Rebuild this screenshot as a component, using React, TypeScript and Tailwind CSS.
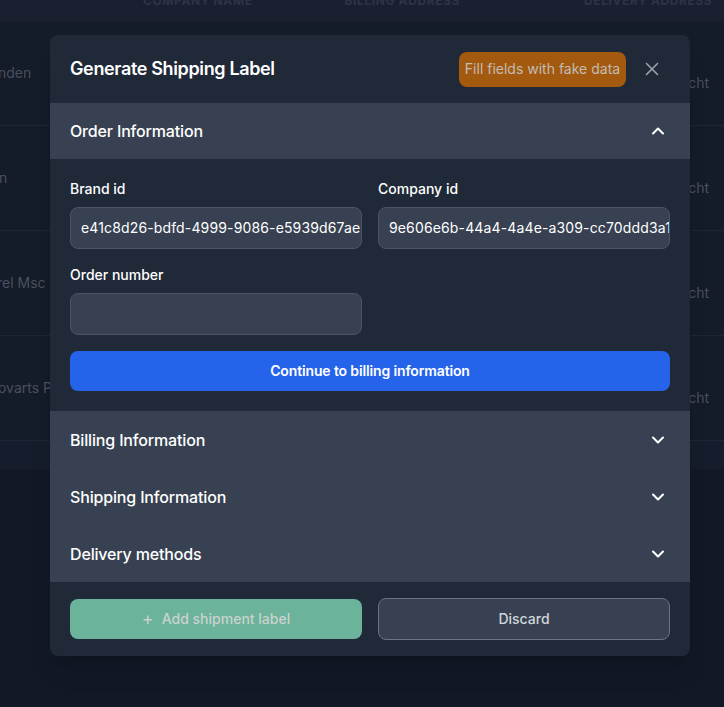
import React from "react";

const font = { fontFamily: "Inter, 'Noto Sans', sans-serif" };

function Chevron({ up }: { up?: boolean }) {
  return (
    <svg width="16" height="16" viewBox="0 0 16 16" fill="none" className="shrink-0">
      <path
        d={up ? "M3 10.5 8 5.5l5 5" : "M3 5.5 8 10.5l5-5"}
        stroke="white"
        strokeWidth="2"
        strokeLinecap="round"
        strokeLinejoin="round"
      />
    </svg>
  );
}

function SectionHeader({ title, up, h }: { title: string; up?: boolean; h: string }) {
  return (
    <div className={`flex items-center justify-between pl-5 pr-[24px] bg-[#374151] ${h}`}>
      <span className="text-base font-medium tracking-[-0.01em] text-white">{title}</span>
      <Chevron up={up} />
    </div>
  );
}

function Field({ label, value }: { label: string; value: string }) {
  return (
    <div className="flex flex-col">
      <label className="mb-2 text-sm font-medium leading-5 text-white">{label}</label>
      <div className="h-[42px] overflow-hidden whitespace-nowrap rounded-lg border border-[#4b5563] bg-[#374151] px-2.5 py-2.5 text-sm leading-5 tracking-[0.01em] text-white">
        {value}
      </div>
    </div>
  );
}

const rows = [
  { left: "nden", ml: "-ml-[2px]" },
  { left: "n", ml: "-ml-[1px]" },
  { left: "rel Msc", ml: "-ml-[3px]" },
  { left: "ovarts Pe", ml: "-ml-[2px]" },
];

export default function App() {
  return (
    <div className="relative h-[707px] w-[724px] overflow-hidden bg-[#121826]" style={font}>
      {/* background table */}
      <div className="flex flex-col">
        <div className="relative h-[21px] overflow-hidden bg-[#1b2030]">
          <div className="flex -mt-[5px] text-xs font-bold uppercase leading-none tracking-wider text-[#2d3445]">
            <span className="ml-[143px]">Company name</span>
            <span className="ml-[92px]">Billing address</span>
            <span className="ml-[124px] whitespace-nowrap">Delivery address</span>
          </div>
        </div>
        {rows.map((r, i) => (
          <div key={i} className="flex h-[105px] items-center justify-between border-b border-[#1f2534] bg-[#141b29] text-sm text-[#4a505e]">
            <span className={`whitespace-nowrap ${r.ml}`}>{r.left}</span>
            <span className="mt-[20px] whitespace-nowrap -mr-[1px] pr-[16px]">Utrecht</span>
          </div>
        ))}
        <div className="h-[28px] bg-[#151c2b]" />
      </div>

      {/* modal overlay */}
      <div className="absolute left-[50px] top-[35px] w-[640px] overflow-hidden rounded-lg bg-[#1f2937] shadow-xl">
        <div className="flex h-[68px] items-center justify-between pl-5 pr-5">
          <h2 className="text-lg font-semibold tracking-[-0.02em] text-white">Generate Shipping Label</h2>
          <div className="flex items-center gap-2">
            <button className="h-[35px] w-[167px] rounded-lg bg-[#a35a0e] text-sm text-[#c2bcb6]">
              Fill fields with fake data
            </button>
            <button className="flex h-9 w-9 items-center justify-center">
              <svg width="14" height="14" viewBox="0 0 14 14" fill="none">
                <path d="M1.5 1.5l11 11M12.5 1.5l-11 11" stroke="#9ca3af" strokeWidth="1.6" strokeLinecap="round" />
              </svg>
            </button>
          </div>
        </div>

        <SectionHeader title="Order Information" up h="h-[56px]" />
        <div className="flex flex-col gap-4 px-5 pb-5 pt-5">
          <div className="grid grid-cols-2 gap-4">
            <Field label="Brand id" value="e41c8d26-bdfd-4999-9086-e5939d67ae5c" />
            <Field label="Company id" value="9e606e6b-44a4-4a4e-a309-cc70ddd3a1f2" />
            <Field label="Order number" value="" />
          </div>
          <button className="h-10 rounded-lg bg-[#2563eb] text-sm font-semibold tracking-[-0.01em] text-white">
            Continue to billing information
          </button>
        </div>

        <SectionHeader title="Billing Information" h="h-[57px]" />
        <SectionHeader title="Shipping Information" h="h-[57px]" />
        <SectionHeader title="Delivery methods" h="h-[57px]" />

        <div className="grid grid-cols-2 items-center gap-4 px-5 py-4">
          <button className="flex h-10 items-center justify-center gap-2 rounded-lg bg-[#6bb39b] text-sm font-medium text-[#c9d2cd]">
            <span className="text-lg font-normal leading-none">+</span>
            <span>Add shipment label</span>
          </button>
          <button className="h-[42px] rounded-lg border border-[#6b7280] bg-[#374151] text-sm font-medium text-[#d1d5db]">
            Discard
          </button>
        </div>
      </div>
    </div>
  );
}
